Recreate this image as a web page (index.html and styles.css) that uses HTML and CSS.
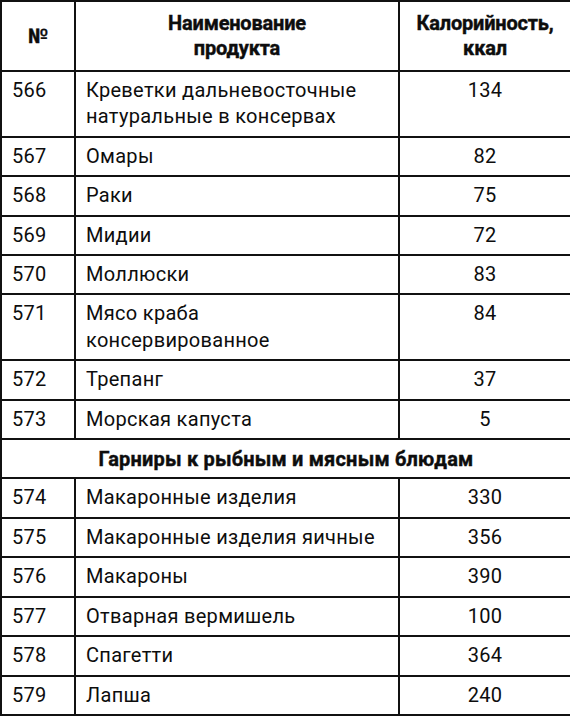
FILE: index.html
```html
<!DOCTYPE html>
<html lang="ru">
<head>
<meta charset="utf-8">
<link rel="stylesheet" href="styles.css">
</head>
<body>
<table class="kcal">
  <colgroup>
    <col class="c-num">
    <col class="c-name">
    <col class="c-val">
  </colgroup>
  <thead>
    <tr>
      <th>№</th>
      <th>Наименование<br>продукта</th>
      <th>Калорийность,<br>ккал</th>
    </tr>
  </thead>
  <tbody>
    <tr class="double"><td>566</td><td>Креветки дальневосточные<br>натуральные в консервах</td><td>134</td></tr>
    <tr><td>567</td><td>Омары</td><td>82</td></tr>
    <tr><td>568</td><td>Раки</td><td>75</td></tr>
    <tr><td>569</td><td>Мидии</td><td>72</td></tr>
    <tr><td>570</td><td>Моллюски</td><td>83</td></tr>
    <tr class="double"><td>571</td><td>Мясо краба<br>консервированное</td><td>84</td></tr>
    <tr><td>572</td><td>Трепанг</td><td>37</td></tr>
    <tr><td>573</td><td>Морская капуста</td><td>5</td></tr>
    <tr class="section"><td colspan="3">Гарниры к рыбным и мясным блюдам</td></tr>
    <tr><td>574</td><td>Макаронные изделия</td><td>330</td></tr>
    <tr><td>575</td><td>Макаронные изделия яичные</td><td>356</td></tr>
    <tr><td>576</td><td>Макароны</td><td>390</td></tr>
    <tr><td>577</td><td>Отварная вермишель</td><td>100</td></tr>
    <tr><td>578</td><td>Спагетти</td><td>364</td></tr>
    <tr><td>579</td><td>Лапша</td><td>240</td></tr>
  </tbody>
</table>
</body>
</html>
```
FILE: styles.css
```css
html, body {
  margin: 0;
  padding: 0;
  background: #fff;
}

.kcal {
  border-collapse: collapse;
  table-layout: fixed;
  width: 570px;
  font-family: Roboto, "Liberation Sans", Arial, sans-serif;
  font-size: 20px;
  line-height: 26.4px;
  color: #0d0d0d;
  letter-spacing: 0.3px;
}

.c-num { width: 74px; }
.c-name { width: 324px; }
.c-val { width: 172px; }

.kcal th,
.kcal td {
  border: 2px solid #111;
  padding: 5px 0 6px 10px;
  vertical-align: top;
  text-align: left;
  white-space: nowrap;
}

.kcal th {
  font-weight: bold;
  text-align: center;
  vertical-align: middle;
  line-height: 25px;
  padding: 9px 0 9px 0;
  letter-spacing: -0.2px;
  -webkit-text-stroke: 0.4px #0d0d0d;
}

.kcal td:nth-child(3) {
  text-align: center;
  padding-left: 0;
}

.kcal .section td {
  font-weight: bold;
  text-align: center;
  padding-left: 0;
  padding-top: 6px;
  padding-bottom: 5px;
  letter-spacing: 0.2px;
  -webkit-text-stroke: 0.4px #0d0d0d;
}
```
